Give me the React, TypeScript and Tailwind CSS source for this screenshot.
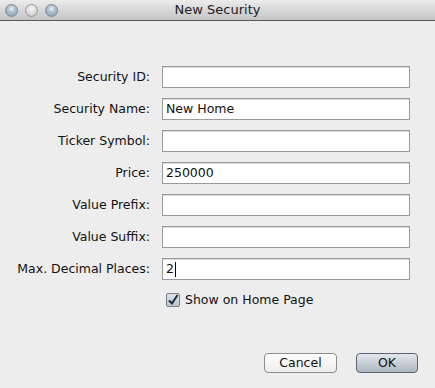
import React from "react";

const font = { fontFamily: '"Lucida Grande", "DejaVu Sans", "Noto Sans", sans-serif' };

function Light() {
  return (
    <div className="w-[13px] h-[13px] rounded-full border border-[#7d8a96] bg-[radial-gradient(circle_at_50%_35%,#e6eef5_0%,#a9bccb_45%,#7f97ab_100%)]" />
  );
}

function Field({ label, value, cursor }: { label: string; value?: string; cursor?: boolean }) {
  return (
    <>
      <div className="text-right text-[12.5px] text-[#111] leading-[22px] whitespace-nowrap">{label}</div>
      <div className="h-[22px] w-[248px] border border-[#9b9b9b] bg-white shadow-[inset_0_1px_0_#d8d8d8] flex items-center px-[3px] text-[12.5px] text-[#111]">
        <span>{value}</span>
        {cursor && <span className="w-px h-[15px] bg-black ml-[1px]" />}
      </div>
    </>
  );
}

export default function App() {
  return (
    <div className="w-[435px] h-[388px] bg-[#ededed] flex flex-col" style={font}>
      <div className="h-[21px] bg-gradient-to-b from-[#ececec] to-[#c4c4c4] border-b border-[#5a5a5a] relative flex items-center">
        <div className="flex gap-[7px] pl-[5px]">
          <Light />
          <div className="w-[13px] h-[13px] rounded-full border border-[#9a9a9a] bg-[radial-gradient(circle_at_50%_35%,#f8f8f8_0%,#d6d6d6_60%,#b8b8b8_100%)]" />
          <Light />
        </div>
        <div className="absolute inset-0 flex items-center justify-center text-[13px] text-[#222]">New Security</div>
      </div>
      <div className="pt-[45px]">
        <div className="grid grid-cols-[150px_248px] gap-x-[12px] gap-y-[10px]">
          <Field label="Security ID:" />
          <Field label="Security Name:" value="New Home" />
          <Field label="Ticker Symbol:" />
          <Field label="Price:" value="250000" />
          <Field label="Value Prefix:" />
          <Field label="Value Suffix:" />
          <Field label="Max. Decimal Places:" value="2" cursor />
        </div>
        <div className="flex items-center pl-[166px] mt-[11px] gap-[5px]">
          <div className="w-[14px] h-[14px] rounded-[2px] border border-[#7b7f86] bg-gradient-to-b from-[#dde3ea] to-[#b9c3cf] flex items-center justify-center">
            <svg width="12" height="12" viewBox="0 0 12 12">
              <path d="M2 6.5 L5 9.5 L10.5 1" fill="none" stroke="#1e2a3a" strokeWidth="2" />
            </svg>
          </div>
          <span className="text-[12.5px] text-[#111]">Show on Home Page</span>
        </div>
        <div className="flex justify-end gap-[19px] pr-[17px] mt-[43px]">
          <button className="w-[73px] h-[20px] rounded-[4px] border border-[#8c8c8c] bg-gradient-to-b from-white to-[#ececec] text-[12.5px] text-[#111] leading-none">Cancel</button>
          <button className="w-[62px] h-[20px] rounded-[4px] border border-[#5c6470] bg-gradient-to-b from-[#e4e8ed] to-[#aeb6c1] text-[12.5px] text-[#111] leading-none">OK</button>
        </div>
      </div>
    </div>
  );
}
